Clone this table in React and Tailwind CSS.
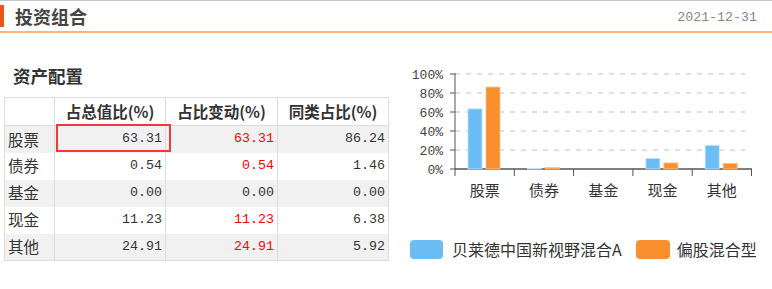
const rows = [
  { name: '股票', total: '63.31', change: '63.31', peer: '86.24', up: true },
  { name: '债券', total: '0.54', change: '0.54', peer: '1.46', up: true },
  { name: '基金', total: '0.00', change: '0.00', peer: '0.00', up: false },
  { name: '现金', total: '11.23', change: '11.23', peer: '6.38', up: true },
  { name: '其他', total: '24.91', change: '24.91', peer: '5.92', up: true },
];

const fund = [63.31, 0.54, 0, 11.23, 24.91];
const peer = [86.24, 1.46, 0, 6.38, 5.92];

const CJK = '"Noto Sans CJK SC", "Noto Sans", sans-serif';
const MONO = '"Liberation Mono", "DejaVu Sans Mono", monospace';

function Chart() {
  const x0 = 55;
  const y0 = 109;
  const step = 59.3;
  const ticks = [0, 20, 40, 60, 80, 100];

  return (
    <svg width="372" height="140" viewBox="0 0 372 140">
      {ticks.map((t) => {
        const y = y0 - t * 0.95;
        return (
          <g key={t}>
            {t > 0 && (
              <line x1={x0} x2="345" y1={y} y2={y} stroke="#d6d6d6" strokeWidth="1.5" strokeDasharray="5 6" />
            )}
            <line x1={x0 - 5} x2={x0} y1={y} y2={y} stroke="#555" strokeWidth="1" />
            <text x="43" y={y + 4.5} textAnchor="end" fontSize="13" fill="#444" fontFamily={MONO}>
              {t}%
            </text>
          </g>
        );
      })}
      <line x1={x0} x2={x0} y1="13" y2={y0} stroke="#555" strokeWidth="1" />
      <line x1={x0} x2="352" y1={y0} y2={y0} stroke="#555" strokeWidth="1.5" />
      {[0, 1, 2, 3, 4, 5].map((i) => (
        <line key={i} x1={x0 + i * step} x2={x0 + i * step} y1={y0} y2={y0 + 7} stroke="#555" strokeWidth="1" />
      ))}
      {rows.map((r, i) => {
        const cx = x0 + i * step;
        const hb = fund[i] * 0.95;
        const ho = peer[i] * 0.95;
        return (
          <g key={r.name}>
            {hb > 0 && (
              <rect x={cx + 13} y={y0 - hb} width="14" height={hb} fill="#6cbdf5" stroke="#c4e4fb" strokeWidth="0.8" />
            )}
            {ho > 0 && (
              <rect x={cx + 31} y={y0 - ho} width="14" height={ho} fill="#fa8f2e" stroke="#fcc08a" strokeWidth="0.8" />
            )}
            <text x={cx + step / 2} y="136" textAnchor="middle" fontSize="15" fill="#333" fontFamily={CJK}>
              {r.name}
            </text>
          </g>
        );
      })}
    </svg>
  );
}

export default function App() {
  return (
    <div className="w-[772px] h-[289px] overflow-hidden bg-white border-t border-[#c8c8c8]" style={{ fontFamily: CJK }}>
      <div className="flex items-center justify-between h-[32px] border-b-2 border-[#ffb380]">
        <div className="flex items-center">
          <div className="w-[4px] h-[22px] bg-[#e8541a]" />
          <span className="ml-[11px] text-[18px] leading-[24px] font-semibold text-[#444]">投资组合</span>
        </div>
        <span className="pr-[15px] pt-[4px] text-[13.3px] text-[#888]" style={{ fontFamily: MONO }}>2021-12-31</span>
      </div>

      <div className="flex">
        <div className="pl-[4px] w-[400px]">
          <div className="mt-[31px] h-[24px] pl-[9px] text-[17.5px] leading-[24px] font-bold text-[#333]">资产配置</div>
          <table className="mt-[9px] table-fixed border-collapse border border-[#dddddd] w-[385px] text-[#333]">
            <colgroup>
              <col className="w-[50px]" />
              <col className="w-[111px]" />
              <col className="w-[112px]" />
              <col className="w-[111px]" />
            </colgroup>
            <thead>
              <tr className="h-[28px] border-b border-[#dddddd]">
                <th className="border-r border-[#dddddd]" />
                <th className="border-r border-[#dddddd] text-[15.5px] font-bold">占总值比(%)</th>
                <th className="border-r border-[#dddddd] text-[15.5px] font-bold">占比变动(%)</th>
                <th className="text-[15.5px] font-bold">同类占比(%)</th>
              </tr>
            </thead>
            <tbody>
              {rows.map((r, i) => (
                <tr key={r.name} className={`h-[27px] ${i % 2 === 0 ? 'bg-[#f1f1f1]' : 'bg-white'}`}>
                  <td className="pl-[3px] border-r border-[#dddddd] text-[15.5px]">{r.name}</td>
                  <td className="relative pr-[3px] border-r border-[#dddddd] text-right text-[13.3px]" style={{ fontFamily: MONO }}>
                    {r.total}
                    {i === 0 && (
                      <div className="absolute left-[1px] right-[-6px] top-[-2px] bottom-[1px] border-2 border-[#f03a3a]" />
                    )}
                  </td>
                  <td
                    className={`pr-[3px] border-r border-[#dddddd] text-right text-[13.3px] ${r.up ? 'text-[#ff0000]' : 'text-[#333]'}`}
                    style={{ fontFamily: MONO }}
                  >
                    {r.change}
                  </td>
                  <td className="pr-[3px] text-right text-[13.3px]" style={{ fontFamily: MONO }}>{r.peer}</td>
                </tr>
              ))}
            </tbody>
          </table>
        </div>

        <div className="flex-1 flex flex-col">
          <div className="mt-[27px]">
            <Chart />
          </div>
          <div className="mt-[37px] pl-[10px] flex items-center text-[16px] text-[#333]">
            <div className="w-[33px] h-[19px] rounded-[4px] bg-[#6cbdf5]" />
            <span className="ml-[9px]">贝莱德中国新视野混合A</span>
            <div className="ml-[14px] w-[34px] h-[19px] rounded-[4px] bg-[#fa8f2e]" />
            <span className="ml-[7px]">偏股混合型</span>
          </div>
        </div>
      </div>
    </div>
  );
}
